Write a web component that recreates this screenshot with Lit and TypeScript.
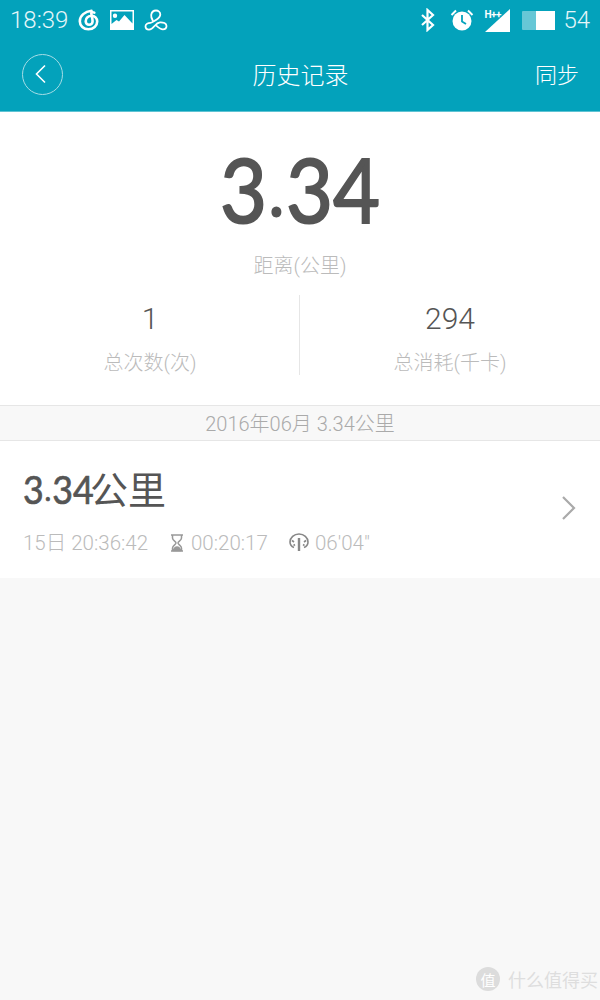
import { LitElement, css, html } from 'lit'
import { customElement } from 'lit/decorators.js'

const CJK = css`Roboto, "Noto Sans CJK SC", sans-serif`;

@customElement('app-root')
export class AppRoot extends LitElement {
  render() {
    return html`
      <div class="page">
        <header class="top">
          <div class="status">
            <span class="time">18:39</span>
            <svg class="ic" width="22" height="22" viewBox="0 0 22 22" fill="none" stroke="#fff" stroke-width="2.600" stroke-linecap="round">
              <path d="M13.500 1.800C7 2.500 1.800 6.500 1.800 12.200c0 4.600 3.800 8 8.600 8 5 0 8.800-3.300 8.800-7.700 0-3.200-2.500-5.700-5.500-5.700-3.300 0-6 2.300-6 5.400 0 2 1.400 3.600 3.400 3.600 2.100 0 3.500-1.500 3.500-3.600 0-2.600-.9-5-1.300-7.700 0-1 1-1.800 3-.9"/>
            </svg>
            <svg class="ic" width="24" height="20" viewBox="0 0 24 20">
              <path fill="#fff" fill-rule="evenodd" d="M0 0h24v20H0zM1.500 1.500v12.500l5-4 2.500 1.500 5.500-6.500 8 8.500V1.500zM5 3.500a2.200 2.200 0 1 1 0 4.400 2.200 2.200 0 0 1 0-4.400z"/>
            </svg>
            <svg class="ic" width="24" height="22" viewBox="0 0 24 22" fill="none" stroke="#fff" stroke-width="1.800" stroke-linecap="round">
              <path d="M9 12C7.500 9.500 6.800 8 7.200 5.800 7.700 3 9.700 1.500 12 1.500s4.300 1.700 4.300 4c0 2.500-2 4-4.300 5.500-2.500 1.600-4 2.800-5.500 2.800C4 13.800 1.500 15 1.500 17.300c0 2 1.600 3.300 3.500 3.300 2.500 0 4-1.800 5.500-3.600 1.500-1.800 3-3.500 5.500-3.700 3.300-.2 6.500 1 6.500 3.700 0 2-1.600 3.300-3.600 3.300-2.800 0-5-2.300-6.900-4"/>
            </svg>
            <span class="spacer"></span>
            <svg class="ic bt" width="16" height="24" viewBox="0 0 16 24" fill="none" stroke="#fff" stroke-width="2.200">
              <path d="M2 7l11 10-5.500 5V2L13 7 2 17"/>
            </svg>
            <svg class="ic" width="24" height="22" viewBox="0 0 24 22">
              <circle cx="12" cy="12" r="9.500" fill="#fff"/>
              <path d="M12 6v6.500l4 2.500" fill="none" stroke="#03a2bb" stroke-width="1.800"/>
              <path d="M1.500 6L6 1.500M22.500 6L18 1.500" stroke="#fff" stroke-width="2" fill="none"/>
            </svg>
            <span class="signal">
              <span class="hpp">H++</span>
              <svg width="25" height="23" viewBox="0 0 25 23"><path fill="#fff" d="M25 0v23H0z"/></svg>
            </span>
            <span class="battery"><span class="level"></span></span>
            <span class="pct">54</span>
          </div>
          <div class="bar">
            <span class="back">
              <svg width="14" height="20" viewBox="0 0 14 20" fill="none" stroke="#fff" stroke-width="1.600">
                <path d="M11 1.500L2.500 10l8.500 8.500"/>
              </svg>
            </span>
            <span class="title">历史记录</span>
            <span class="sync">同步</span>
          </div>
        </header>

        <section class="summary">
          <div class="big"><span class="squeeze">3<span class="dot">.</span>34</span></div>
          <div class="cap">距离(公里)</div>
          <div class="stats">
            <div class="stat">
              <div class="num">1</div>
              <div class="cap">总次数(次)</div>
            </div>
            <div class="stat">
              <div class="num">294</div>
              <div class="cap">总消耗(千卡)</div>
            </div>
          </div>
        </section>

        <div class="month">2016年06月 3.34公里</div>

        <div class="row">
          <div class="info">
            <div class="dist"><span class="d">3<span class="dot">.</span>34</span>公里</div>
            <div class="meta">
              <span class="when">15日 20:36:42</span>
              <span class="item">
                <svg width="14" height="18" viewBox="0 0 14 18" fill="none" stroke="#999" stroke-width="1.500">
                  <path d="M1 1h12M1 17h12M2.500 1v3c0 2.500 3.500 3.500 3.500 5s-3.500 2.500-3.500 5v3M11.500 1v3c0 2.500-3.500 3.500-3.500 5s3.500 2.500 3.500 5v3"/>
                  <path d="M3.500 16.500c0-2 2-3.500 3.500-3.500s3.500 1.500 3.500 3.500z" fill="#999"/>
                </svg>
                00:20:17
              </span>
              <span class="item">
                <svg width="20" height="19" viewBox="0 0 20 19" fill="none" stroke="#888" stroke-width="1.600">
                  <path d="M5 14.500C2.500 13.500 1 11.500 1 9c0-4.500 4-8 9-8s9 3.500 9 8c0 2.500-1.500 4.500-4 5.500"/>
                  <path d="M3 7.500l2 1.500M17 7.500l-2 1.500M4.500 12.500l1.500-1M15.500 12.500l-1.500-1"/>
                  <path d="M10 5v13" stroke-width="2.400"/>
                </svg>
                06'04"
              </span>
            </div>
          </div>
          <svg class="chev" width="16" height="26" viewBox="0 0 16 26" fill="none" stroke="#aaa" stroke-width="2.200">
            <path d="M2 2l11 11L2 24"/>
          </svg>
        </div>

        <div class="mark">
          <span class="seal">值</span>
          <span>什么值得买</span>
        </div>
      </div>
    `
  }

  static styles = css`
    :host {
      display: block;
      font-family: ${CJK};
    }
    .page {
      position: relative;
      height: 1000px;
      background: #f8f8f8;
      overflow: hidden;
    }
    .top {
      height: 111px;
      background: #03a2bb;
      border-bottom: 1px solid #5fc3d3;
      color: #fff;
    }
    .status {
      display: flex;
      align-items: center;
      height: 40px;
      padding: 0 10px;
      gap: 10px;
    }
    .time, .pct {
      font-size: 24px;
      font-weight: 300;
      color: #e6f6f9;
    }
    .pct { margin-left: -2px; }
    .spacer { flex: 1; }
    .bt { margin-right: 4px; }
    .signal {
      position: relative;
      display: flex;
      margin-left: 1px;
    }
    .hpp {
      position: absolute;
      left: -1px;
      top: 1px;
      font-size: 10px;
      font-weight: 700;
      letter-spacing: -0.5px;
      line-height: 10px;
    }
    .battery {
      display: block;
      width: 33px;
      height: 19px;
      margin-left: 2px;
      background: rgba(255, 255, 255, 0.4);
      border-radius: 1px;
    }
    .level {
      display: block;
      width: 19px;
      height: 19px;
      margin-left: 14px;
      background: #fff;
    }
    .bar {
      display: grid;
      grid-template-columns: 1fr auto 1fr;
      align-items: center;
      height: 70px;
      padding: 0 21px 0 22px;
      margin-top: -2px;
    }
    .back {
      display: flex;
      align-items: center;
      justify-content: center;
      width: 39px;
      height: 39px;
      margin-top: 2px;
      border: 1px solid #a6dde6;
      border-radius: 50%;
    }
    .back svg { margin-right: 3px; }
    .title {
      font-size: 24px;
      font-weight: 300;
    }
    .sync {
      justify-self: end;
      font-size: 22px;
      font-weight: 300;
    }
    .summary {
      height: 293px;
      background: #fff;
      border-bottom: 1px solid #e6e6e6;
      text-align: center;
    }
    .big {
      height: 140px;
      padding-top: 20px;
      box-sizing: border-box;
      font-family: Lato, sans-serif;
      font-size: 90px;
      line-height: 112px;
      color: #555;
      -webkit-text-stroke: 2px #555;
    }
    .squeeze {
      display: inline-block;
      transform: scaleX(0.9);
    }
    .dot {
      font-size: 0.8em;
      vertical-align: 0.1em;
      margin: 0 0.03em;
    }
    .cap {
      font-size: 20px;
      line-height: 28px;
      font-weight: 300;
      color: #bbb;
    }
    .stats {
      display: grid;
      grid-template-columns: 1fr 1fr;
      margin-top: 15px;
    }
    .stat {
      height: 80px;
      padding-top: 2px;
      box-sizing: border-box;
    }
    .stat + .stat {
      border-left: 1px solid #e6e6e6;
      margin-left: -1px;
    }
    .num {
      font-size: 30px;
      line-height: 44px;
      font-weight: 300;
      color: #555;
      margin-bottom: 8px;
    }
    .month {
      height: 34px;
      line-height: 36px;
      text-align: center;
      font-size: 20px;
      font-weight: 300;
      color: #aaa;
      border-bottom: 1px solid #e6e6e6;
    }
    .row {
      display: flex;
      align-items: center;
      justify-content: space-between;
      height: 137px;
      padding: 0 23px;
      box-sizing: border-box;
      background: #fff;
    }
    .info { margin-top: 4px; }
    .dist {
      font-size: 38px;
      line-height: 48px;
      color: #555;
      white-space: nowrap;
    }
    .d {
      display: inline-block;
      width: 67px;
      font-family: Lato, sans-serif;
      font-size: 38px;
      transform: scaleX(0.94);
      transform-origin: left;
      -webkit-text-stroke: 0.7px #555;
    }
    .meta {
      display: flex;
      align-items: center;
      margin-top: 12px;
      font-size: 20.500px;
      font-weight: 300;
      line-height: 30px;
      color: #bbb;
    }
    .when { width: 147px; }
    .item {
      display: flex;
      align-items: center;
      gap: 7px;
      width: 119px;
    }
    .item:last-child { gap: 6px; }
    .chev { margin-top: -4px; }
    .mark {
      position: absolute;
      right: 2px;
      bottom: 8px;
      display: flex;
      align-items: center;
      gap: 8px;
      font-size: 18px;
      color: #dedede;
    }
    .seal {
      display: flex;
      align-items: center;
      justify-content: center;
      width: 24px;
      height: 24px;
      box-sizing: border-box;
      font-size: 15px;
      border-radius: 50%;
      background: #dcdcdc;
      color: #fff;
    }
  `
}

declare global {
  interface HTMLElementTagNameMap {
    'app-root': AppRoot
  }
}
